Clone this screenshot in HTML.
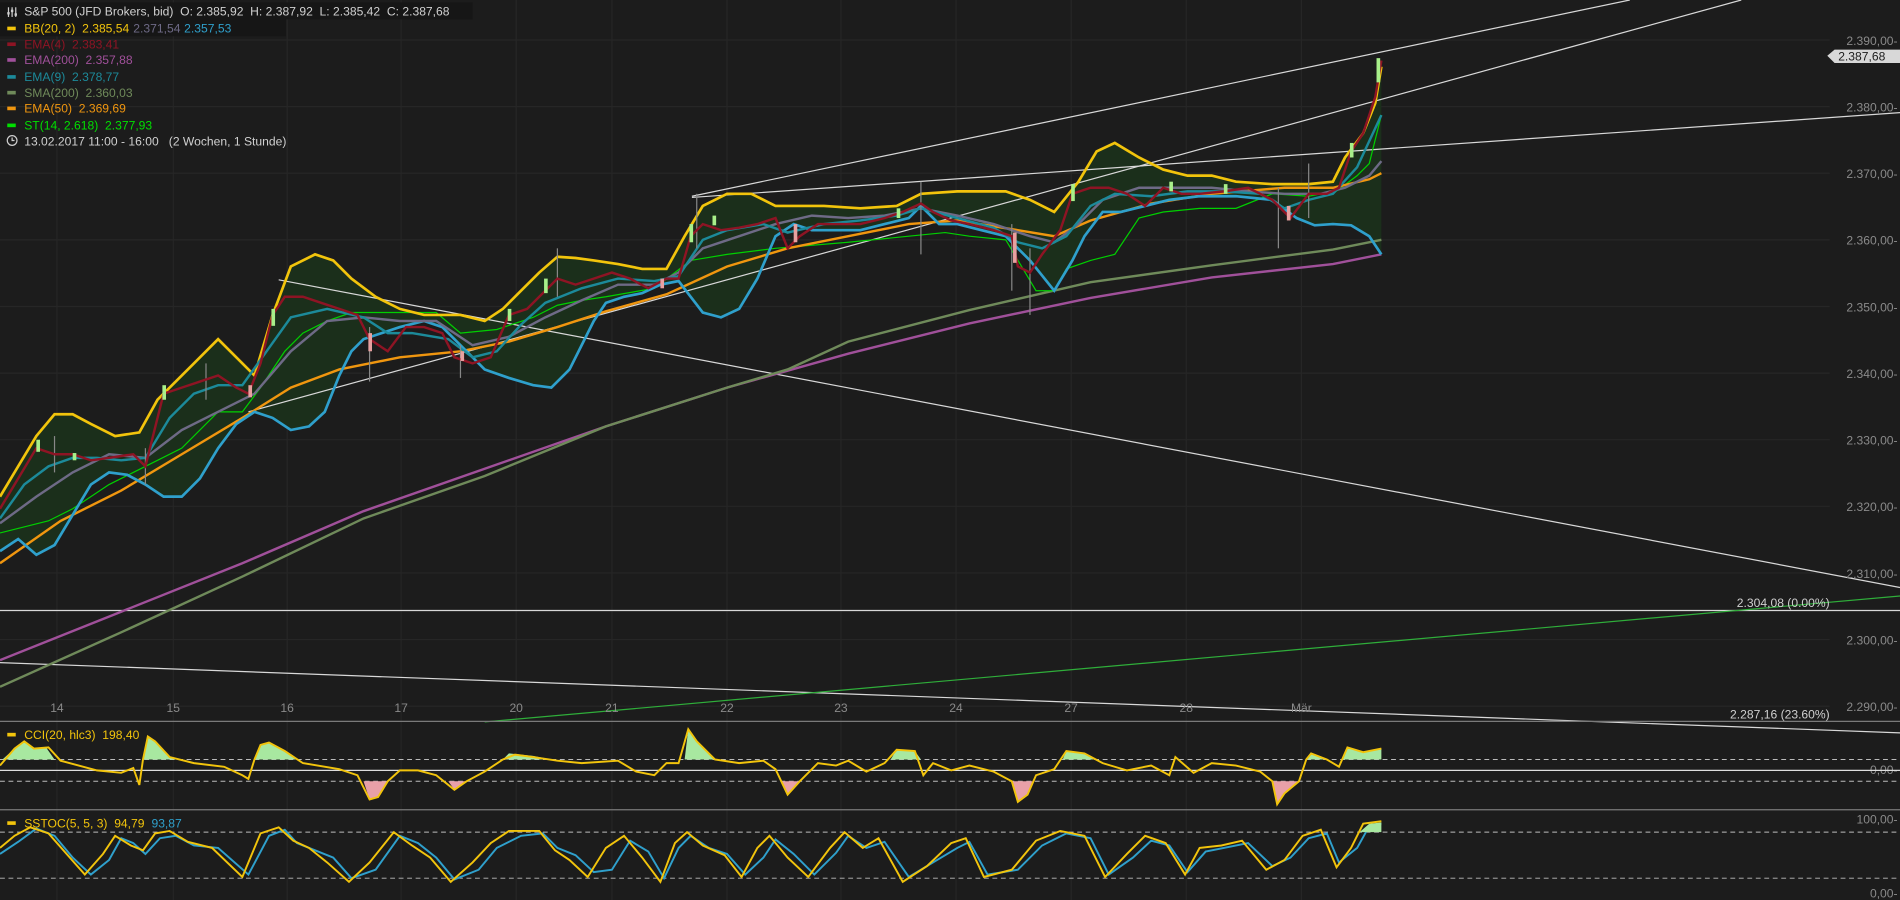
<!DOCTYPE html>
<html><head><meta charset="utf-8"><style>
html,body{margin:0;padding:0;background:#1c1c1c;overflow:hidden}
svg{display:block}
text{font-family:"Liberation Sans",sans-serif;white-space:pre}
</style></head><body>
<svg width="1900" height="900" viewBox="0 0 1568 743" preserveAspectRatio="none" xmlns="http://www.w3.org/2000/svg" xml:space="preserve">
<rect width="1568" height="743" fill="#1c1c1c"/>
<g stroke="#262626" stroke-width="1">
<line x1="0" y1="33" x2="1510" y2="33"/><line x1="0" y1="88" x2="1510" y2="88"/><line x1="0" y1="143" x2="1510" y2="143"/><line x1="0" y1="198" x2="1510" y2="198"/><line x1="0" y1="253" x2="1510" y2="253"/><line x1="0" y1="308" x2="1510" y2="308"/><line x1="0" y1="363" x2="1510" y2="363"/><line x1="0" y1="418" x2="1510" y2="418"/><line x1="0" y1="473" x2="1510" y2="473"/><line x1="0" y1="528" x2="1510" y2="528"/><line x1="0" y1="583" x2="1510" y2="583"/>
<line x1="47" y1="0" x2="47" y2="743"/><line x1="143" y1="0" x2="143" y2="743"/><line x1="237" y1="0" x2="237" y2="743"/><line x1="331" y1="0" x2="331" y2="743"/><line x1="426" y1="0" x2="426" y2="743"/><line x1="505" y1="0" x2="505" y2="743"/><line x1="600" y1="0" x2="600" y2="743"/><line x1="694" y1="0" x2="694" y2="743"/><line x1="789" y1="0" x2="789" y2="743"/><line x1="884" y1="0" x2="884" y2="743"/><line x1="979" y1="0" x2="979" y2="743"/><line x1="1074" y1="0" x2="1074" y2="743"/>
</g>
<polygon fill="#1b2f1b" points="0,410 15,385 30,360 45,342 60,342 75,350 95,360 115,357 130,330 145,315 160,300 180,280 195,295 210,310 225,260 240,220 260,210 275,215 290,230 310,245 330,255 350,260 380,260 400,265 415,255 430,240 445,225 460,212 475,213 490,215 510,218 530,222 550,222 565,195 580,170 600,160 620,160 640,170 660,170 680,170 710,172 740,170 760,160 790,158 830,158 850,165 870,175 890,150 905,125 920,118 940,130 960,140 980,145 1000,145 1020,150 1050,152 1080,152 1100,150 1110,130 1125,110 1135,85 1140,55 1140,210 1130,195 1115,186 1100,185 1085,186 1070,180 1050,165 1020,162 990,162 965,165 945,170 925,175 910,175 895,195 885,215 870,240 850,215 830,195 810,190 790,185 775,185 760,170 750,180 730,185 710,190 690,190 670,190 655,185 640,195 625,230 610,255 595,262 580,258 570,245 560,232 545,235 530,242 515,245 500,250 490,265 480,285 470,305 455,320 440,318 420,312 400,305 380,285 365,270 350,265 330,270 315,275 300,280 290,290 280,310 268,340 255,352 240,355 225,345 210,340 195,350 180,370 165,395 150,410 135,410 120,400 105,392 90,390 75,400 60,425 45,450 30,458 15,445 0,455"/>
<g stroke="#d8d8d8" stroke-width="1" fill="none">
<line x1="571" y1="162" x2="1345" y2="0"/>
<line x1="205" y1="340" x2="1437" y2="0"/>
<line x1="571" y1="163" x2="1568" y2="93"/>
<line x1="230" y1="231" x2="1568" y2="485"/>
<line x1="0" y1="547" x2="1568" y2="605"/>
<line x1="0" y1="504" x2="1568" y2="504"/>
</g>
<line x1="400" y1="596" x2="1568" y2="492" stroke="#2fae3a" stroke-width="1"/>
<polyline fill="none" stroke="#a0509a" stroke-width="2" points="0,545 100,505 200,465 300,422 400,387 500,352 600,320 700,292 800,267 900,246 1000,229 1100,218 1140,210"/>
<polyline fill="none" stroke="#6f8a5a" stroke-width="2" points="0,567 100,522 200,476 300,428 400,393 500,352 600,320 650,305 700,282 800,256 900,233 1000,219 1100,206 1140,198"/>
<polyline fill="none" stroke="#00d000" stroke-width="1" points="0,440 40,430 60,420 90,400 110,390 130,380 150,370 180,340 200,340 215,320 235,290 250,275 270,265 290,258 330,258 360,258 380,275 410,272 440,262 460,252 480,248 500,245 540,238 570,215 600,210 640,205 700,200 750,195 780,192 800,195 830,198 855,240 870,240 880,222 900,215 920,210 940,180 960,175 990,172 1020,172 1050,160 1080,162 1090,160 1100,160 1120,145 1130,135 1140,95"/>
<polyline fill="none" stroke="#f0960f" stroke-width="2" points="0,465 50,430 100,405 150,375 200,345 240,320 280,305 330,295 380,290 420,282 460,270 500,257 550,243 600,220 650,205 700,195 750,185 790,182 840,190 870,195 900,182 950,168 1000,160 1060,155 1100,155 1130,148 1140,143"/>
<polyline fill="none" stroke="#f2c40c" stroke-width="2.2" points="0,410 15,385 30,360 45,342 60,342 75,350 95,360 115,357 130,330 145,315 160,300 180,280 195,295 210,310 225,260 240,220 260,210 275,215 290,230 310,245 330,255 350,260 380,260 400,265 415,255 430,240 445,225 460,212 475,213 490,215 510,218 530,222 550,222 565,195 580,170 600,160 620,160 640,170 660,170 680,170 710,172 740,170 760,160 790,158 830,158 850,165 870,175 890,150 905,125 920,118 940,130 960,140 980,145 1000,145 1020,150 1050,152 1080,152 1100,150 1110,130 1125,110 1135,85 1140,55"/>
<polyline fill="none" stroke="#2fa0cc" stroke-width="2.2" points="0,455 15,445 30,458 45,450 60,425 75,400 90,390 105,392 120,400 135,410 150,410 165,395 180,370 195,350 210,340 225,345 240,355 255,352 268,340 280,310 290,290 300,280 315,275 330,270 350,265 365,270 380,285 400,305 420,312 440,318 455,320 470,305 480,285 490,265 500,250 515,245 530,242 545,235 560,232 570,245 580,258 595,262 610,255 625,230 640,195 655,185 670,190 690,190 710,190 730,185 750,180 760,170 775,185 790,185 810,190 830,195 850,215 870,240 885,215 895,195 910,175 925,175 945,170 965,165 990,162 1020,162 1050,165 1070,180 1085,186 1100,185 1115,186 1130,195 1140,210"/>
<polyline fill="none" stroke="#6e6a86" stroke-width="2" points="0,432 30,410 60,390 90,375 120,378 150,355 180,340 210,325 240,290 270,265 300,262 330,265 360,265 390,285 420,278 450,262 480,248 510,235 540,235 560,225 580,205 610,195 640,185 670,178 700,180 730,178 760,172 790,178 820,185 850,195 870,200 890,185 910,165 940,155 970,155 1000,155 1030,158 1060,160 1090,160 1110,155 1130,145 1140,133"/>
<polyline fill="none" stroke="#1c8a9a" stroke-width="2" points="0,428 20,400 40,385 60,378 80,378 100,380 120,378 140,345 160,325 180,318 200,318 220,290 240,262 270,255 300,262 320,275 340,275 370,280 390,295 410,290 430,268 450,250 480,238 510,230 540,232 560,228 580,198 600,190 630,185 650,192 680,185 710,182 740,178 760,172 790,180 820,188 840,200 860,205 880,195 900,170 920,160 950,162 980,158 1010,158 1040,160 1060,172 1080,165 1100,160 1120,138 1140,95"/>
<g stroke="#888" stroke-width="1">
<line x1="305" y1="270" x2="305" y2="315"/><line x1="380" y1="285" x2="380" y2="312"/><line x1="760" y1="150" x2="760" y2="210"/><line x1="835" y1="185" x2="835" y2="240"/><line x1="850" y1="205" x2="850" y2="260"/><line x1="1055" y1="155" x2="1055" y2="205"/><line x1="1080" y1="135" x2="1080" y2="180"/><line x1="460" y1="205" x2="460" y2="245"/><line x1="575" y1="160" x2="575" y2="205"/><line x1="120" y1="370" x2="120" y2="400"/><line x1="170" y1="300" x2="170" y2="330"/><line x1="45" y1="360" x2="45" y2="390"/>
</g>
<polyline fill="none" stroke="#8e1424" stroke-width="2" points="0,420 15,395 30,370 45,375 60,375 75,380 90,378 110,375 120,385 135,325 150,320 165,315 180,310 195,320 205,325 215,300 225,260 235,245 250,245 265,250 280,255 295,260 305,280 320,290 335,270 350,270 365,275 375,295 390,300 405,295 420,260 435,255 450,240 460,230 475,235 490,230 505,225 520,230 535,238 550,230 560,230 570,195 580,185 595,190 610,188 625,185 640,180 650,205 660,195 675,185 690,185 710,185 730,180 745,175 760,168 770,175 785,182 800,185 820,190 835,195 840,220 850,225 860,210 875,190 885,160 900,155 915,155 930,160 945,170 960,155 975,160 990,160 1010,158 1030,155 1050,165 1065,180 1080,160 1095,160 1105,155 1115,125 1125,110 1135,80 1140,50"/>
<g fill="#a8f08a">
<rect x="134" y="318" width="3" height="12"/><rect x="224" y="255" width="3" height="14"/><rect x="419" y="255" width="3" height="10"/><rect x="569" y="185" width="3" height="15"/><rect x="884" y="152" width="3" height="14"/><rect x="1114" y="118" width="3" height="12"/><rect x="1136" y="48" width="3" height="20"/><rect x="449" y="230" width="3" height="12"/><rect x="30" y="363" width="3" height="10"/><rect x="588" y="178" width="3" height="8"/><rect x="740" y="172" width="3" height="8"/><rect x="965" y="150" width="3" height="8"/><rect x="1010" y="152" width="3" height="8"/><rect x="60" y="374" width="3" height="6"/>
</g>
<g fill="#e8a0a0">
<rect x="304" y="275" width="3" height="15"/><rect x="836" y="192" width="3" height="25"/><rect x="655" y="185" width="3" height="15"/><rect x="1062" y="170" width="3" height="12"/><rect x="380" y="290" width="3" height="8"/><rect x="205" y="318" width="3" height="10"/><rect x="545" y="230" width="3" height="8"/>
</g>
<g fill="#8a8a8a" font-size="10" text-anchor="end">
<text x="1566" y="37">2.390,00-</text><text x="1566" y="92">2.380,00-</text><text x="1566" y="147">2.370,00-</text><text x="1566" y="202">2.360,00-</text><text x="1566" y="257">2.350,00-</text><text x="1566" y="312">2.340,00-</text><text x="1566" y="367">2.330,00-</text><text x="1566" y="422">2.320,00-</text><text x="1566" y="477">2.310,00-</text><text x="1566" y="532">2.300,00-</text><text x="1566" y="587">2.290,00-</text>
<text x="1566" y="639">0,00-</text><text x="1566" y="680">100,00-</text><text x="1566" y="741">0,00-</text>
</g>
<polygon points="1508,46 1514,41 1568,41 1568,52 1514,52" fill="#d8d8d8"/>
<text x="1517" y="50" font-size="10" fill="#1c1c1c">2.387,68</text>
<text x="1510" y="501" font-size="10" fill="#d0d0d0" text-anchor="end">2.304,08 (0.00%)</text>
<text x="1510" y="593" font-size="10" fill="#d0d0d0" text-anchor="end">2.287,16 (23.60%)</text>
<g fill="#8a8a8a" font-size="10" text-anchor="middle">
<text x="47" y="588">14</text><text x="143" y="588">15</text><text x="237" y="588">16</text><text x="331" y="588">17</text><text x="426" y="588">20</text><text x="505" y="588">21</text><text x="600" y="588">22</text><text x="694" y="588">23</text><text x="789" y="588">24</text><text x="884" y="588">27</text><text x="979" y="588">28</text><text x="1074" y="588">Mär</text>
</g>
<line x1="0" y1="595.5" x2="1568" y2="595.5" stroke="#7a7a7a"/>
<line x1="0" y1="668.5" x2="1568" y2="668.5" stroke="#7a7a7a"/>
<g stroke="#bbb" stroke-dasharray="4,3" stroke-width="0.8"><line x1="0" y1="627" x2="1568" y2="627"/><line x1="0" y1="645" x2="1568" y2="645"/><line x1="0" y1="687" x2="1568" y2="687"/><line x1="0" y1="725" x2="1568" y2="725"/></g>
<line x1="0" y1="636" x2="1568" y2="636" stroke="#ddd" stroke-width="1"/>
<g fill="#a8e8a0"><polygon points="2,627 12,618 20,612 28,618 38,617 45,627"/><polygon points="118,627 122,608 128,612 140,625 150,627"/><polygon points="210,627 215,615 222,613 235,620 245,627"/><polygon points="415,627 420,622 440,624 455,627"/><polygon points="565,627 568,602 575,612 590,627"/><polygon points="735,627 740,619 755,620 760,627"/><polygon points="877,627 880,620 895,622 905,627"/><polygon points="1078,627 1082,622 1095,627"/><polygon points="1108,627 1112,617 1125,621 1140,618 1140,627"/></g>
<g fill="#e8a0a8"><polygon points="300,645 305,660 312,658 320,645"/><polygon points="370,645 375,652 385,645"/><polygon points="645,645 650,656 660,645"/><polygon points="835,645 840,662 848,656 852,645"/><polygon points="1050,645 1054,664 1060,655 1072,645"/></g>
<polyline fill="none" stroke="#f2c40c" stroke-width="1.6" points="0,632 12,618 20,612 28,618 40,617 50,628 65,632 80,636 100,638 110,634 115,648 118,627 122,608 128,612 140,625 160,630 185,633 200,640 205,643 210,627 215,615 222,613 235,620 250,630 280,635 295,640 305,660 312,658 320,645 330,636 345,636 360,640 375,652 385,645 400,637 415,627 425,623 440,625 460,628 480,630 510,628 525,637 540,640 550,630 560,630 568,602 575,612 590,627 610,630 630,628 640,635 650,656 660,645 675,630 690,632 700,628 715,637 730,630 740,619 755,620 762,640 770,630 785,636 800,632 820,637 835,645 840,662 848,656 855,640 870,635 880,620 895,622 910,630 930,636 950,632 965,640 970,625 985,638 1000,630 1020,632 1040,637 1050,645 1054,664 1060,655 1072,645 1078,627 1082,622 1095,627 1105,633 1112,617 1125,621 1140,618"/>
<polyline fill="none" stroke="#2fa0cc" stroke-width="1.6" points="0,705 15,695 30,684 45,690 60,708 75,722 90,710 100,692 110,696 120,705 132,692 145,690 160,698 180,700 205,722 222,690 235,685 245,696 260,702 275,708 290,725 310,718 330,690 345,696 360,708 375,726 395,718 410,700 430,690 448,688 460,700 475,706 490,720 505,718 520,694 535,703 548,725 560,700 570,690 585,700 600,705 615,722 630,708 640,693 655,705 672,722 690,704 700,690 715,700 730,695 750,724 770,712 790,700 800,695 815,722 840,718 860,698 880,688 900,692 915,722 935,708 950,694 965,698 980,720 995,703 1010,700 1030,696 1050,715 1065,708 1080,692 1095,688 1105,712 1120,700 1130,682 1140,680"/>
<polygon points="1122,687 1130,680 1140,679 1140,687" fill="#a8e8a0"/>
<polyline fill="none" stroke="#f2c40c" stroke-width="1.6" points="0,700 12,690 25,683 40,688 55,705 70,722 85,705 95,690 108,698 118,702 128,688 140,686 155,695 175,700 200,724 215,688 230,683 242,694 255,700 270,712 288,728 305,712 325,687 340,698 355,708 372,728 390,712 405,696 420,686 445,686 458,702 470,710 485,724 500,700 515,690 530,708 545,728 557,696 567,687 580,698 598,706 612,724 625,700 635,690 650,708 667,724 685,700 697,687 712,700 725,692 745,728 765,715 785,696 797,692 812,724 835,718 855,694 875,686 895,690 912,724 930,705 945,690 962,696 978,722 990,700 1008,698 1025,694 1045,718 1060,710 1075,690 1090,685 1103,716 1115,700 1125,680 1140,678"/>
<g font-size="10">
<rect x="0" y="2" width="390" height="14" fill="#161616"/>
<g stroke="#d0d0d0" stroke-width="1"><line x1="7" y1="6" x2="7" y2="14"/><line x1="10" y1="6" x2="10" y2="14"/><line x1="13" y1="6" x2="13" y2="14"/></g>
<g fill="#d0d0d0"><rect x="6" y="10" width="2" height="2"/><rect x="9" y="8" width="2" height="2"/><rect x="12" y="11" width="2" height="2"/></g>
<text x="20" y="13" fill="#d0d0d0">S&amp;P 500 (JFD Brokers, bid)  O: 2.385,92  H: 2.387,92  L: 2.385,42  C: 2.387,68</text>
<rect x="0" y="16" width="236" height="14" fill="#161616"/>
<rect x="6" y="22" width="7" height="3" fill="#f2c40c"/><text x="20" y="27" fill="#f2c40c">BB(20, 2)  2.385,54</text><text x="110" y="27" fill="#6e6a86">2.371,54</text><text x="152" y="27" fill="#2fa0cc">2.357,53</text>
<rect x="6" y="35" width="7" height="3" fill="#8e1424"/><text x="20" y="40" fill="#8e1424">EMA(4)  2.383,41</text>
<rect x="6" y="48" width="7" height="3" fill="#a0509a"/><text x="20" y="53" fill="#a0509a">EMA(200)  2.357,88</text>
<rect x="6" y="62" width="7" height="3" fill="#1c8a9a"/><text x="20" y="67" fill="#1c8a9a">EMA(9)  2.378,77</text>
<rect x="6" y="75" width="7" height="3" fill="#6f8a5a"/><text x="20" y="80" fill="#6f8a5a">SMA(200)  2.360,03</text>
<rect x="6" y="88" width="7" height="3" fill="#f0960f"/><text x="20" y="93" fill="#f0960f">EMA(50)  2.369,69</text>
<rect x="6" y="102" width="7" height="3" fill="#00e000"/><text x="20" y="107" fill="#00e000">ST(14, 2.618)  2.377,93</text>
<circle cx="10" cy="116" r="4" fill="none" stroke="#d0d0d0"/><path d="M10 113.5V116H12" stroke="#d0d0d0" fill="none"/>
<text x="20" y="120" fill="#d0d0d0">13.02.2017 11:00 - 16:00   (2 Wochen, 1 Stunde)</text>
<rect x="6" y="605" width="7" height="3" fill="#f2c40c"/><text x="20" y="610" fill="#f2c40c">CCI(20, hlc3)  198,40</text>
<rect x="6" y="678" width="7" height="3" fill="#f2c40c"/><text x="20" y="683" fill="#f2c40c">SSTOC(5, 5, 3)  94,79</text><text x="125" y="683" fill="#2fa0cc">93,87</text>
</g>
</svg>
</body></html>
